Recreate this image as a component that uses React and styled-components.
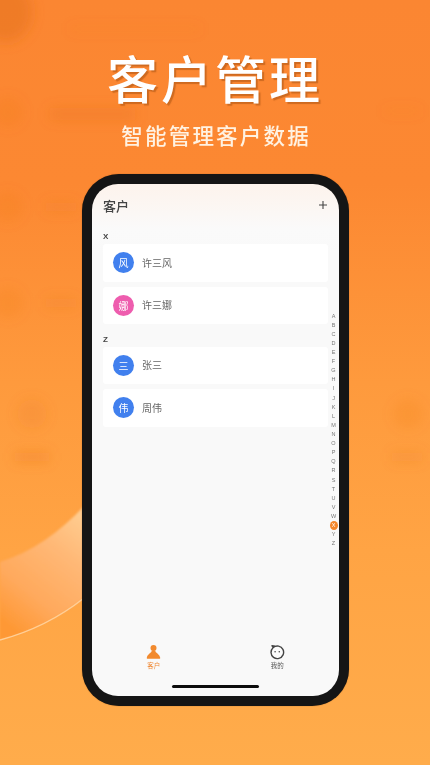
import React from "react";
import styled, { createGlobalStyle } from "styled-components";

const Global = createGlobalStyle`
  html, body { margin: 0; padding: 0; width: 430px; height: 765px; overflow: hidden; }
  * { box-sizing: border-box; }
  body { font-family: "Noto Sans CJK SC", "Noto Sans", sans-serif; }
`;

const Page = styled.div`
  position: relative;
  width: 430px;
  height: 765px;
  overflow: hidden;
  display: flex;
  flex-direction: column;
  align-items: center;
  padding-top: 44px;
  background: linear-gradient(180deg, #fb8632 0%, #fc8832 24%, #fe9a3d 50%, #ffa444 72%, #ffac4b 100%);
`;

const Backdrop = styled.svg`
  position: absolute;
  inset: 0;
  width: 430px;
  height: 765px;
`;

const Title = styled.h1`
  position: relative;
  margin: 0;
  height: 66px;
  font-size: 51px;
  line-height: 66px;
  font-weight: 500;
  letter-spacing: 3px;
  color: #fff;
  text-shadow: 2px 2px 1px rgba(150, 70, 10, 0.45);
  filter: blur(0.3px);
`;

const Subtitle = styled.p`
  position: relative;
  margin: 9px -2.200px 0 0;
  height: 32px;
  font-size: 21.500px;
  line-height: 32px;
  font-weight: 500;
  letter-spacing: 2.200px;
  color: #fff2e2;
  filter: blur(0.3px);
`;

const Phone = styled.div`
  position: relative;
  margin: 23px 0 0 1px;
  width: 267px;
  height: 532px;
  padding: 10px;
  border-radius: 37px;
  background: #151515;
  box-shadow: 0 0 1px rgba(80, 40, 0, 0.6);
`;

const Screen = styled.div`
  position: relative;
  width: 100%;
  height: 100%;
  border-radius: 26px;
  overflow: hidden;
  display: flex;
  flex-direction: column;
  background: linear-gradient(180deg, #fdf3ec 0%, #fafafa 9%, #f9f9f9 14%);
  filter: blur(0.35px);
`;

const Header = styled.header`
  display: flex;
  justify-content: space-between;
  align-items: center;
  height: 20px;
  margin-top: 11px;
  padding: 0 11px 0 11px;
  color: #444;
  font-size: 13px;
  font-weight: 500;
`;

const AddIcon = styled.svg`
  width: 10px;
  height: 10px;
  display: block;
`;

const SectionLabel = styled.div`
  height: 12px;
  margin-top: ${(p) => p.$top}px;
  padding-left: 11px;
  font-family: "Liberation Sans", sans-serif;
  font-size: 8px;
  line-height: 12px;
  font-weight: 700;
  color: #444;
`;

const List = styled.div`
  display: flex;
  flex-direction: column;
  gap: 5px;
  margin: 1px 11px 0 11px;
`;

const Row = styled.div`
  height: 37.500px;
  display: flex;
  align-items: center;
  gap: 8px;
  padding-left: 10px;
  border-radius: 3px;
  background: #fff;
`;

const Avatar = styled.div`
  width: 21px;
  height: 21px;
  border-radius: 50%;
  display: flex;
  align-items: center;
  justify-content: center;
  font-size: 10px;
  color: #fff;
  background: ${(p) => p.$color};
`;

const Name = styled.span`
  padding-bottom: 1px;
  font-size: 10px;
  color: #666;
`;

const IndexBar = styled.div`
  position: absolute;
  top: 127px;
  right: 1px;
  width: 9px;
  display: flex;
  flex-direction: column;
  align-items: center;
`;

const IndexLetter = styled.span`
  width: 8px;
  height: 9.120px;
  display: flex;
  align-items: center;
  justify-content: center;
  border-radius: 50%;
  font-family: "Liberation Sans", sans-serif;
  font-size: 5.500px;
  color: ${(p) => (p.$active ? "#fff" : "#777")};
  background: ${(p) => (p.$active ? "#f4862a" : "transparent")};
`;

const TabBar = styled.nav`
  margin-top: auto;
  height: 52px;
  display: flex;
  align-items: flex-start;
`;

const Tab = styled.div`
  flex: 1;
  display: flex;
  flex-direction: column;
  align-items: center;
  gap: 1px;
  font-size: 6.500px;
  line-height: 9px;
  color: ${(p) => (p.$active ? "#f08a35" : "#555")};
`;

const TabIcon = styled.svg`
  width: 15px;
  height: 16px;
  display: block;
`;

const HomeBar = styled.div`
  position: absolute;
  left: 80px;
  bottom: 8px;
  width: 87px;
  height: 3px;
  border-radius: 2px;
  background: #0c0c0c;
`;

const letters = "ABCDEFGHIJKLMNOPQRSTUVWXYZ".split("");

const sections = [
  {
    key: "X",
    top: 16,
    rows: [
      { name: "许三风", mark: "风", color: "#4180ee" },
      { name: "许三娜", mark: "娜", color: "#ee5dae" },
    ],
  },
  {
    key: "Z",
    top: 9.500,
    rows: [
      { name: "张三", mark: "三", color: "#4180ee" },
      { name: "周伟", mark: "伟", color: "#4180ee" },
    ],
  },
];

export default function App() {
  return (
    <Page>
      <Global />
      <Backdrop viewBox="0 0 430 765">
        <defs>
          <filter id="soft" x="-100%" y="-200%" width="300%" height="500%">
            <feGaussianBlur stdDeviation="6" />
          </filter>
          <filter id="edge" x="-10%" y="-10%" width="120%" height="120%">
            <feGaussianBlur stdDeviation="0.8" />
          </filter>
          <linearGradient id="wave" x1="0.8" y1="0" x2="0.3" y2="1">
            <stop offset="0" stopColor="#ffcb8e" />
            <stop offset="0.3" stopColor="#ffb876" />
            <stop offset="0.7" stopColor="#ffa95c" />
            <stop offset="1" stopColor="#fe9834" />
          </linearGradient>
        </defs>
        <path d="M0 562 C 32 552, 60 532, 84 506 L84 598 C 60 617, 30 632, 0 640 Z" fill="url(#wave)" filter="url(#edge)" />
        <path d="M0 640 C 30 632, 60 617, 84 598" fill="none" stroke="#ffcf98" strokeWidth="1.400" />
        <g fill="#e8741c" filter="url(#soft)">
          <ellipse cx="6" cy="12" rx="26" ry="30" opacity="0.6" />
          <rect x="70" y="26" width="130" height="6" opacity="0.1" />
          <rect x="50" y="108" width="85" height="12" opacity="0.3" />
          <circle cx="8" cy="112" r="15" opacity="0.14" />
          <circle cx="8" cy="207" r="15" opacity="0.14" />
          <rect x="46" y="202" width="30" height="10" opacity="0.2" />
          <circle cx="8" cy="303" r="15" opacity="0.14" />
          <rect x="46" y="298" width="30" height="10" opacity="0.2" />
          <circle cx="32" cy="414" r="15" opacity="0.16" />
          <rect x="15" y="452" width="34" height="10" opacity="0.3" />
          <circle cx="408" cy="414" r="15" opacity="0.14" />
          <rect x="392" y="452" width="30" height="10" opacity="0.2" />
          <rect x="385" y="108" width="35" height="6" opacity="0.1" />
        </g>
      </Backdrop>

      <Title>客户管理</Title>
      <Subtitle>智能管理客户数据</Subtitle>

      <Phone>
        <Screen>
          <Header>
            <span>客户</span>
            <AddIcon viewBox="0 0 10 10">
              <path d="M5 1v8M1 5h8" stroke="#444" strokeWidth="1.100" fill="none" />
            </AddIcon>
          </Header>

          {sections.map((section) => (
            <React.Fragment key={section.key}>
              <SectionLabel $top={section.top}>{section.key}</SectionLabel>
              <List>
                {section.rows.map((row) => (
                  <Row key={row.name}>
                    <Avatar $color={row.color}>{row.mark}</Avatar>
                    <Name>{row.name}</Name>
                  </Row>
                ))}
              </List>
            </React.Fragment>
          ))}

          <IndexBar>
            {letters.map((l) => (
              <IndexLetter key={l} $active={l === "X"}>{l}</IndexLetter>
            ))}
          </IndexBar>

          <TabBar>
            <Tab $active>
              <TabIcon viewBox="0 0 15 16">
                <circle cx="7.500" cy="3.900" r="3" fill="#f28a2e" />
                <path d="M5.800 6.500C5.800 9 1.400 9.800.800 13.800c-.1.600.2 1 .8 1H13.400c.6 0 .9-.4.8-1C13.600 9.800 9.200 9 9.200 6.500Z" fill="#f28a2e" />
              </TabIcon>
              <span>客户</span>
            </Tab>
            <Tab>
              <TabIcon viewBox="0 0 15 16">
                <path d="M3.300 3.400A6.300 6.300 0 1 1 1 8.500c0-2 .8-3.700 2.200-5.100L2 1.800l3.200.5" fill="#fcfcfc" stroke="#444" strokeWidth="1.400" strokeLinejoin="round" />
                <circle cx="5.100" cy="7.800" r="0.800" fill="#444" />
                <circle cx="9.300" cy="7.800" r="0.800" fill="#444" />
              </TabIcon>
              <span>我的</span>
            </Tab>
          </TabBar>

          <HomeBar />
        </Screen>
      </Phone>
    </Page>
  );
}
